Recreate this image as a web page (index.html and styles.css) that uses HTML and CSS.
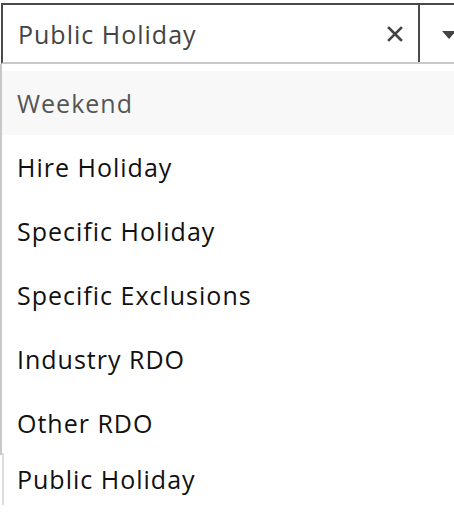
FILE: index.html
```html
<!DOCTYPE html>
<html>
<head>
<meta charset="utf-8">
<link rel="stylesheet" href="styles.css">
</head>
<body>
<div class="select">
  <div class="control">
    <div class="value">Public Holiday</div>
    <div class="clear">
      <svg width="16" height="16" viewBox="0 0 16 16"><path d="M2 2 L14 14 M14 2 L2 14" stroke="#444" stroke-width="2.6" stroke-linecap="square"/></svg>
    </div>
    <div class="divider"></div>
    <div class="arrow">
      <svg width="14" height="8" viewBox="0 0 14 8"><path d="M0 0 H14 L7 8 Z" fill="#444"/></svg>
    </div>
  </div>
  <div class="menu">
    <div class="option focused">Weekend</div>
    <div class="option">Hire Holiday</div>
    <div class="option">Specific Holiday</div>
    <div class="option">Specific Exclusions</div>
    <div class="option">Industry RDO</div>
    <div class="option">Other RDO</div>
  </div>
  <div class="extra">
    <div class="option last">Public Holiday</div>
  </div>
</div>
</body>
</html>
```
FILE: styles.css
```css
html, body {
  margin: 0;
  padding: 0;
  background: #fff;
  overflow: hidden;
}
body {
  width: 454px;
  height: 518px;
  font-family: "Open Sans", "Noto Sans", sans-serif;
}
.select {
  width: 500px;
}
.control {
  display: flex;
  align-items: center;
  margin: 3px 0 0 1px;
  height: 57px;
  border-top: 2px solid #4a4a4a;
  border-left: 2px solid #4a4a4a;
  border-bottom: 2px solid #c8c8c8;
}
.value {
  flex: 1;
  padding-left: 15px;
  font-size: 25px;
  letter-spacing: 1px;
  color: #444;
}
.clear {
  width: 16px;
  height: 16px;
  margin-right: 15px;
  display: flex;
  flex: none;
}
.divider {
  width: 2px;
  align-self: stretch;
  background: #4a4a4a;
  flex: none;
}
.arrow {
  width: 58px;
  padding-left: 22px;
  display: flex;
  align-items: center;
  margin-top: 2px;
  flex: none;
}
.menu {
  border-left: 2px solid #c8c8c8;
  padding-top: 7px;
}
.option {
  height: 64px;
  display: flex;
  align-items: center;
  padding-left: 15px;
  font-size: 25px;
  letter-spacing: 1px;
  color: #111;
}
.option.focused {
  background: #f8f8f8;
  color: #555;
}
.extra {
  margin-left: 2px;
  border-left: 2px solid #ddd;
  margin-top: -2px;
}
.option.last {
  height: 52px;
  padding-left: 13px;
}
```
